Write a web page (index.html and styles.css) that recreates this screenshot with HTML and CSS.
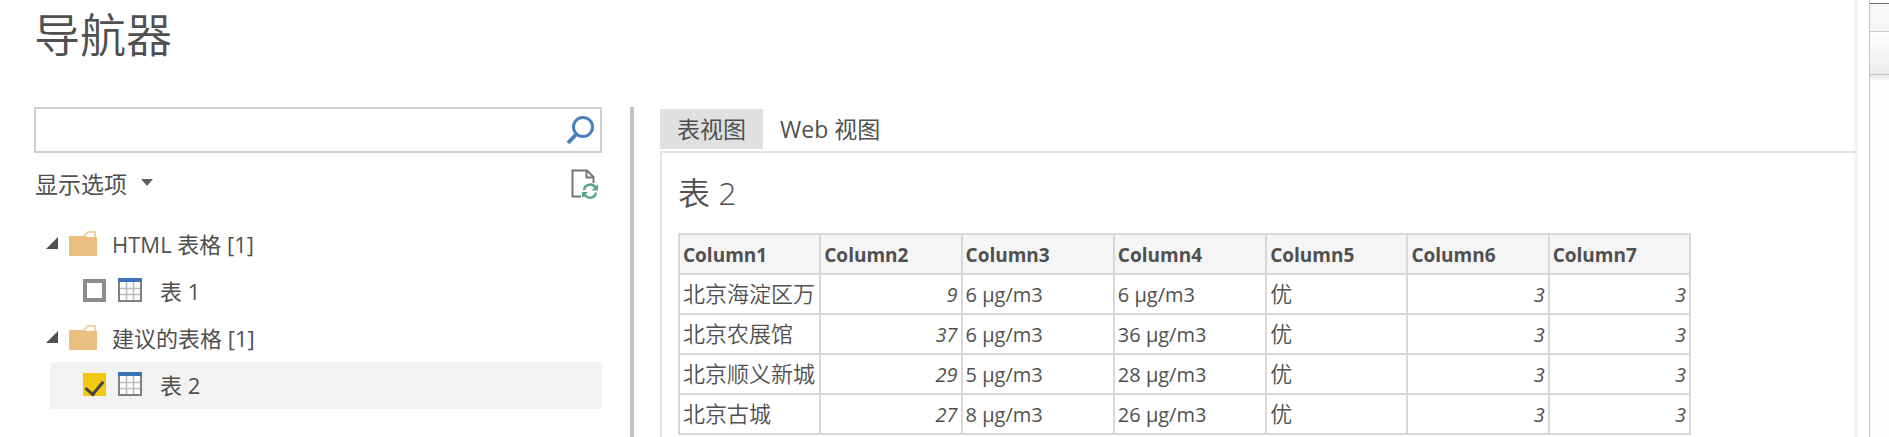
FILE: index.html
```
<!DOCTYPE html>
<html lang="zh-CN">
<head>
    <meta charset="UTF-8">
    <meta name="viewport" content="width=device-width, initial-scale=1.0">
    <title>导航器</title>
    <link rel="stylesheet" href="styles.css">
</head>
<body>

    <div class="dialog">
        <h1>导航器</h1>

        <div class="content">
            <!-- Search and table list -->
            <div class="sidebar">
                <div class="search">
                    <input type="text" aria-label="搜索">
                    <button class="search-btn" aria-label="搜索">
                        <svg width="28" height="30" viewBox="0 0 28 30" fill="none" stroke="#4a80ba" stroke-width="3">
                            <circle cx="17" cy="12" r="9.5"/>
                            <path d="M10.5 19L2 28" stroke-width="4"/>
                        </svg>
                    </button>
                </div>

                <div class="options">
                    <button class="options-btn">显示选项
                        <svg width="12" height="8" viewBox="0 0 12 8"><path d="M0 0h12L6 7z" fill="#606060"/></svg>
                    </button>
                    <button class="refresh-btn" aria-label="刷新">
                        <svg width="28" height="30" viewBox="0 0 28 30" fill="none">
                            <path d="M10 27.500H1.500V1.500H16L22.500 8V14" stroke="#777" stroke-width="2"/>
                            <path d="M15.500 1.500V8.500H22.500" stroke="#777" stroke-width="2"/>
                            <path d="M13 21C14 14.500 22 14 24.500 19M25 23.500C24 30 16 30 13.500 25.500" stroke="#58a584" stroke-width="2.500"/>
                            <path d="M27 15V21.500H20.500zM11 29V23H17z" fill="#58a584"/>
                        </svg>
                    </button>
                </div>

                <div class="tree">
                    <div class="group">
                        <svg class="caret" width="12" height="12" viewBox="0 0 12 12"><path d="M12 0V12H0z" fill="#505050"/></svg>
                        <svg class="folder" width="28" height="26" viewBox="0 0 28 26">
                            <path d="M14 7L19 2H26V8" fill="none" stroke="#f1d5a8" stroke-width="2"/>
                            <path d="M0 6H16L18 7H28V26H0z" fill="#e9c081"/>
                        </svg>
                        <span>HTML 表格 [1]</span>
                    </div>
                    <label class="item">
                        <input type="checkbox">
                        <svg class="sheet" width="24" height="24" viewBox="0 0 24 24">
                            <path d="M1 1H23V23H1z" fill="#fff" stroke="#808080" stroke-width="2"/>
                            <path d="M8.500 4V22M15.500 4V22M2 10.500H22M2 16.500H22" stroke="#bbb" stroke-width="1.500"/>
                            <path d="M0 0H24V4H0z" fill="#3a74b4"/>
                        </svg>
                        <span>表 1</span>
                    </label>
                    <div class="group">
                        <svg class="caret" width="12" height="12" viewBox="0 0 12 12"><path d="M12 0V12H0z" fill="#505050"/></svg>
                        <svg class="folder" width="28" height="26" viewBox="0 0 28 26">
                            <path d="M14 7L19 2H26V8" fill="none" stroke="#f1d5a8" stroke-width="2"/>
                            <path d="M0 6H16L18 7H28V26H0z" fill="#e9c081"/>
                        </svg>
                        <span>建议的表格 [1]</span>
                    </div>
                    <label class="item selected">
                        <input type="checkbox" checked>
                        <svg class="sheet" width="24" height="24" viewBox="0 0 24 24">
                            <path d="M1 1H23V23H1z" fill="#fff" stroke="#808080" stroke-width="2"/>
                            <path d="M8.500 4V22M15.500 4V22M2 10.500H22M2 16.500H22" stroke="#bbb" stroke-width="1.500"/>
                            <path d="M0 0H24V4H0z" fill="#3a74b4"/>
                        </svg>
                        <span>表 2</span>
                    </label>
                </div>
            </div>

            <!-- Preview -->
            <div class="preview">
                <div class="tabs">
                    <button class="tab active">表视图</button>
                    <button class="tab">Web 视图</button>
                </div>
                <div class="panel">
                    <h2>表 2</h2>
                    <table>
                        <colgroup>
                            <col><col><col class="wide"><col class="wide"><col><col><col>
                        </colgroup>
                        <thead>
                            <tr><th>Column1</th><th>Column2</th><th>Column3</th><th>Column4</th><th>Column5</th><th>Column6</th><th>Column7</th></tr>
                        </thead>
                        <tbody>
                            <tr><td class="zh">北京海淀区万</td><td class="num">9</td><td>6 µg/m3</td><td>6 µg/m3</td><td class="zh">优</td><td class="num">3</td><td class="num">3</td></tr>
                            <tr><td class="zh">北京农展馆</td><td class="num">37</td><td>6 µg/m3</td><td>36 µg/m3</td><td class="zh">优</td><td class="num">3</td><td class="num">3</td></tr>
                            <tr><td class="zh">北京顺义新城</td><td class="num">29</td><td>5 µg/m3</td><td>28 µg/m3</td><td class="zh">优</td><td class="num">3</td><td class="num">3</td></tr>
                            <tr><td class="zh">北京古城</td><td class="num">27</td><td>8 µg/m3</td><td>26 µg/m3</td><td class="zh">优</td><td class="num">3</td><td class="num">3</td></tr>
                        </tbody>
                    </table>
                </div>
            </div>
        </div>
    </div>

    <!-- Window behind the dialog -->
    <div class="behind">
        <div class="behind-title"></div>
        <div class="behind-bar"></div>
        <div class="behind-body"></div>
    </div>

</body>
</html>
```
FILE: styles.css
```
* {
    box-sizing: border-box;
}
body {
    margin: 0;
    height: 100vh;
    display: flex;
    overflow: hidden;
    background: #fff;
    color: #505050;
    font-family: "Open Sans", "Noto Sans CJK SC", sans-serif;
    font-size: 22px;
}
button {
    padding: 0;
    border: 0;
    background: none;
    color: inherit;
    font: inherit;
}
svg {
    display: block;
    flex: none;
}
.dialog {
    flex: 1;
    min-width: 0;
    display: flex;
    flex-direction: column;
    padding-right: 11px;
}
h1 {
    margin: 0;
    padding: 0 34px;
    height: 107px;
    border-right: 4px solid #f4f4f4;
    font-size: 46px;
    font-weight: 350;
    line-height: 68px;
}
.content {
    flex: 1;
    min-height: 0;
    display: flex;
    padding-left: 34px;
}
.sidebar {
    flex: none;
    width: 568px;
}
.search {
    display: flex;
    align-items: center;
    height: 46px;
    padding-right: 6px;
    border: 2px solid #cfcfcf;
}
.search input {
    flex: 1;
    height: 100%;
    padding: 0 8px;
    border: 0;
    outline: 0;
    font: inherit;
}
.options {
    display: flex;
    align-items: center;
    justify-content: space-between;
    height: 61px;
    padding: 0 3px 0 1px;
}
.options-btn {
    display: flex;
    align-items: center;
    gap: 14px;
    padding-bottom: 2px;
    font-size: 23px;
}
.tree {
    padding: 7px 0 0 16px;
}
.group,
.item {
    display: flex;
    align-items: center;
    height: 47px;
    padding-bottom: 3px;
}
.caret {
    margin: 0 11px 0 -4px;
}
.folder {
    margin-right: 15px;
}
.item {
    padding-left: 33px;
}
.item.selected {
    background: #f3f3f3;
}
.item input {
    appearance: none;
    display: grid;
    place-items: center;
    width: 23px;
    height: 23px;
    margin: 0 12px 0 0;
    border: 4px solid #8c8c8c;
    background: #fff;
}
.item input:checked {
    border-color: #f2c811;
    background: #f2c811;
}
.item input:checked::before {
    content: "";
    width: 8px;
    height: 15px;
    margin-bottom: 4px;
    border: solid #444;
    border-width: 0 3px 3px 0;
    transform: rotate(40deg);
}
.sheet {
    margin-right: 18px;
}
.preview {
    flex: 1;
    min-width: 0;
    display: flex;
    flex-direction: column;
    margin-left: 28px;
    padding-left: 26px;
    border-left: 4px solid #c4c4c4;
}
.tabs {
    display: flex;
    height: 44px;
    padding: 2px 0;
    border-right: 4px solid #f4f4f4;
}
.tab {
    padding: 0 17px;
    font-size: 23px;
    line-height: 38px;
}
.tab.active {
    background: #e0e0e0;
}
.panel {
    flex: 1;
    min-height: 0;
    padding-left: 16px;
    border: solid #e4e4e4;
    border-width: 2px 0 0 2px;
    box-shadow: inset -4px 0 #f4f4f4;
}
h2 {
    margin: 0;
    height: 80px;
    font-size: 32px;
    font-weight: 350;
    line-height: 80px;
}
table {
    table-layout: fixed;
    width: 1013px;
    border-collapse: collapse;
    font-size: 20px;
}
col {
    width: 141px;
}
col.wide {
    width: 152px;
}
th,
td {
    height: 40px;
    padding: 2px 3px 0;
    border: 2px solid #d8d8d8;
    line-height: 32px;
    text-align: left;
    white-space: nowrap;
    overflow: hidden;
}
th {
    background: #f5f5f5;
    font-size: 19px;
}
.zh {
    padding: 0 0 4px 3px;
    font-family: "Noto Sans CJK SC", sans-serif;
    font-size: 22px;
    font-weight: 350;
}
.num {
    font-style: italic;
    text-align: right;
}
.behind {
    flex: none;
    width: 20px;
    display: flex;
    flex-direction: column;
    border-left: 1px solid #c8c8c8;
}
.behind-title {
    height: 29px;
    margin-top: 3px;
    border-top: 1px solid #6a6a6a;
    border-bottom: 1px solid #c8c8c8;
    background: #f7f7f7;
}
.behind-bar {
    height: 43px;
    border-bottom: 1px solid #c4c4c4;
    background: linear-gradient(#fff, #ececec);
}
.behind-body {
    flex: 1;
    background: linear-gradient(#e6e6e6, #fdfdfd 6px);
}
```
